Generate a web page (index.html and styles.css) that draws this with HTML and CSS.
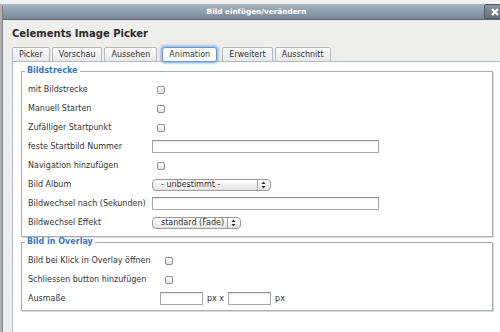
FILE: index.html
```html
<!DOCTYPE html>
<html lang="de">
<head>
    <meta charset="UTF-8">
    <meta name="viewport" content="width=device-width, initial-scale=1.0">
    <title>Bild einfügen/verändern</title>
    <link rel="stylesheet" href="styles.css">
</head>
<body>
    <div class="dialog">
        <div class="titlebar">
            <span class="title">Bild einfügen/verändern</span>
            <button class="close" type="button" aria-label="Schliessen">
                <svg width="8" height="8" viewBox="0 0 8 8"><path d="M1 1L7 7M7 1L1 7" stroke="#fff" stroke-width="2"/></svg>
            </button>
        </div>

        <div class="content">
            <h1>Celements Image Picker</h1>

            <ul class="tabs">
                <li class="tab">Picker</li>
                <li class="tab">Vorschau</li>
                <li class="tab">Aussehen</li>
                <li class="tab active">Animation</li>
                <li class="tab">Erweitert</li>
                <li class="tab">Ausschnitt</li>
            </ul>

            <div class="panel">
                <!-- Bildstrecke -->
                <fieldset class="group">
                    <legend>Bildstrecke</legend>
                    <div class="rows">
                        <label>mit Bildstrecke</label>
                        <div class="cell"><input class="check" type="checkbox"></div>

                        <label>Manuell Starten</label>
                        <div class="cell"><input class="check" type="checkbox"></div>

                        <label>Zufälliger Startpunkt</label>
                        <div class="cell"><input class="check" type="checkbox"></div>

                        <label>feste Startbild Nummer</label>
                        <div class="cell"><input class="field" type="text"></div>

                        <label>Navigation hinzufügen</label>
                        <div class="cell"><input class="check" type="checkbox"></div>

                        <label>Bild Album</label>
                        <div class="cell">
                            <span class="select album">
                                <select><option>- unbestimmt -</option></select>
                                <svg class="arrows" width="13" height="10" viewBox="0 0 13 10"><path d="M0.5 0V10" stroke="#a0a0a0"/><path d="M4.5 4L8.5 4L6.5 1.5Z M4.5 6L8.5 6L6.5 8.5Z" fill="#333"/></svg>
                            </span>
                        </div>

                        <label>Bildwechsel nach (Sekunden)</label>
                        <div class="cell"><input class="field" type="text"></div>

                        <label>Bildwechsel Effekt</label>
                        <div class="cell">
                            <span class="select effect">
                                <select><option>standard (Fade)</option></select>
                                <svg class="arrows" width="13" height="10" viewBox="0 0 13 10"><path d="M0.5 0V10" stroke="#a0a0a0"/><path d="M4.5 4L8.5 4L6.5 1.5Z M4.5 6L8.5 6L6.5 8.5Z" fill="#333"/></svg>
                            </span>
                        </div>
                    </div>
                </fieldset>

                <!-- Bild in Overlay -->
                <fieldset class="group overlay">
                    <legend>Bild in Overlay</legend>
                    <div class="rows">
                        <label>Bild bei Klick in Overlay öffnen</label>
                        <div class="cell"><input class="check" type="checkbox"></div>

                        <label>Schliessen button hinzufügen</label>
                        <div class="cell"><input class="check" type="checkbox"></div>

                        <label>Ausmaße</label>
                        <div class="cell">
                            <input class="field small" type="text">
                            <span class="unit">px x</span>
                            <input class="field small" type="text">
                            <span class="unit">px</span>
                        </div>
                    </div>
                </fieldset>
            </div>
        </div>
    </div>
</body>
</html>
```

FILE: styles.css
```css
html, body {
    margin: 0;
    padding: 0;
    height: 100%;
    overflow: hidden;
}
body {
    font-family: "DejaVu Sans", Verdana, sans-serif;
    font-size: 8px;
    color: #333;
    background: linear-gradient(#f2f2f2 4px, #b6afaf 4px);
}
.dialog {
    margin: 4px 0 0 2px;
    width: 507px;
    height: 328px;
    display: flex;
    flex-direction: column;
    border-left: 1px solid #7a8088;
    border-top-left-radius: 4px;
    background: #eeeeec;
    overflow: hidden;
}
.titlebar {
    position: relative;
    flex: none;
    height: 15px;
    display: flex;
    align-items: center;
    justify-content: center;
    background: linear-gradient(#a8b5c1, #788898);
    border-bottom: 1px solid #5b6976;
    color: #fff;
    font-size: 7.3px;
    font-weight: bold;
}
.close {
    position: absolute;
    top: 0;
    right: 4px;
    width: 22px;
    height: 15px;
    padding: 0;
    display: flex;
    align-items: center;
    justify-content: center;
    border: 1px solid #4f5b66;
    border-radius: 2px;
    background: linear-gradient(#8894a1, #66737f);
}
.content {
    flex: 1;
    min-height: 0;
    display: flex;
    flex-direction: column;
    padding-left: 9px;
}
h1 {
    margin: 8px 0 7px;
    font-size: 10px;
    line-height: 12px;
    color: #2b2b2b;
}
.tabs {
    list-style: none;
    margin: 0 0 -1px;
    padding: 0;
    display: flex;
    gap: 2px;
    position: relative;
}
.tab {
    height: 13px;
    line-height: 13px;
    padding: 0 6px;
    border: 1px solid #b4b9be;
    border-radius: 2px 2px 0 0;
    background: linear-gradient(#fbfbfb, #e8e8e8);
    color: #333;
}
.tab.active {
    margin: 0 3px;
    background: #fff;
    border-color: #6f98c8;
    border-radius: 3px;
    box-shadow: 0 0 0 1px #9fbfe6, 0 0 2px 2px rgba(130, 170, 220, 0.55);
}
.panel {
    flex: 1;
    background: #fff;
    border-top: 1px solid #b4bbc2;
    border-left: 1px solid #b4bbc2;
    padding: 4px 17px 0 8px;
}
.group {
    margin: 0;
    padding: 4px 0 4px 6px;
    border: 1px solid #a9adad;
    box-shadow: 1px 1px 0 #dcdede;
}
.group legend {
    margin-left: -3px;
    padding: 0 2px;
    line-height: 10px;
    font-weight: bold;
    color: #3877bd;
}
.overlay {
    padding-bottom: 2px;
}
.rows {
    display: grid;
    grid-template-columns: 124px 1fr;
    grid-auto-rows: 19px;
    align-items: center;
}
.overlay .rows {
    grid-template-columns: 132px 1fr;
}
.cell {
    display: flex;
    align-items: center;
}
.check {
    appearance: none;
    margin: 0 0 0 5px;
    width: 8px;
    height: 8px;
    border: 1px solid #8f8f8f;
    border-radius: 2px;
    background: linear-gradient(#fff, #e2e2e2);
}
.field {
    box-sizing: border-box;
    width: 227px;
    height: 13px;
    margin: 0;
    padding: 0 2px;
    border: 1px solid #a7a7a7;
    border-top-color: #8d8d8d;
    box-shadow: inset 0 1px 1px rgba(0, 0, 0, 0.08);
    font: inherit;
}
.field.small {
    width: 43px;
}
.unit {
    margin: 0 4px;
}
.select {
    position: relative;
    display: inline-block;
}
.select select {
    appearance: none;
    display: block;
    box-sizing: border-box;
    height: 12px;
    margin: 0;
    padding: 0 16px 0 8px;
    border: 1px solid #9b9b9b;
    border-radius: 4px;
    background: linear-gradient(#fff, #e4e4e4);
    font: inherit;
    line-height: 10px;
    text-align: left;
    color: #333;
}
.album select {
    width: 119px;
}
.effect select {
    width: 89px;
}
.select .arrows {
    position: absolute;
    top: 1px;
    right: 1px;
    pointer-events: none;
}
```
